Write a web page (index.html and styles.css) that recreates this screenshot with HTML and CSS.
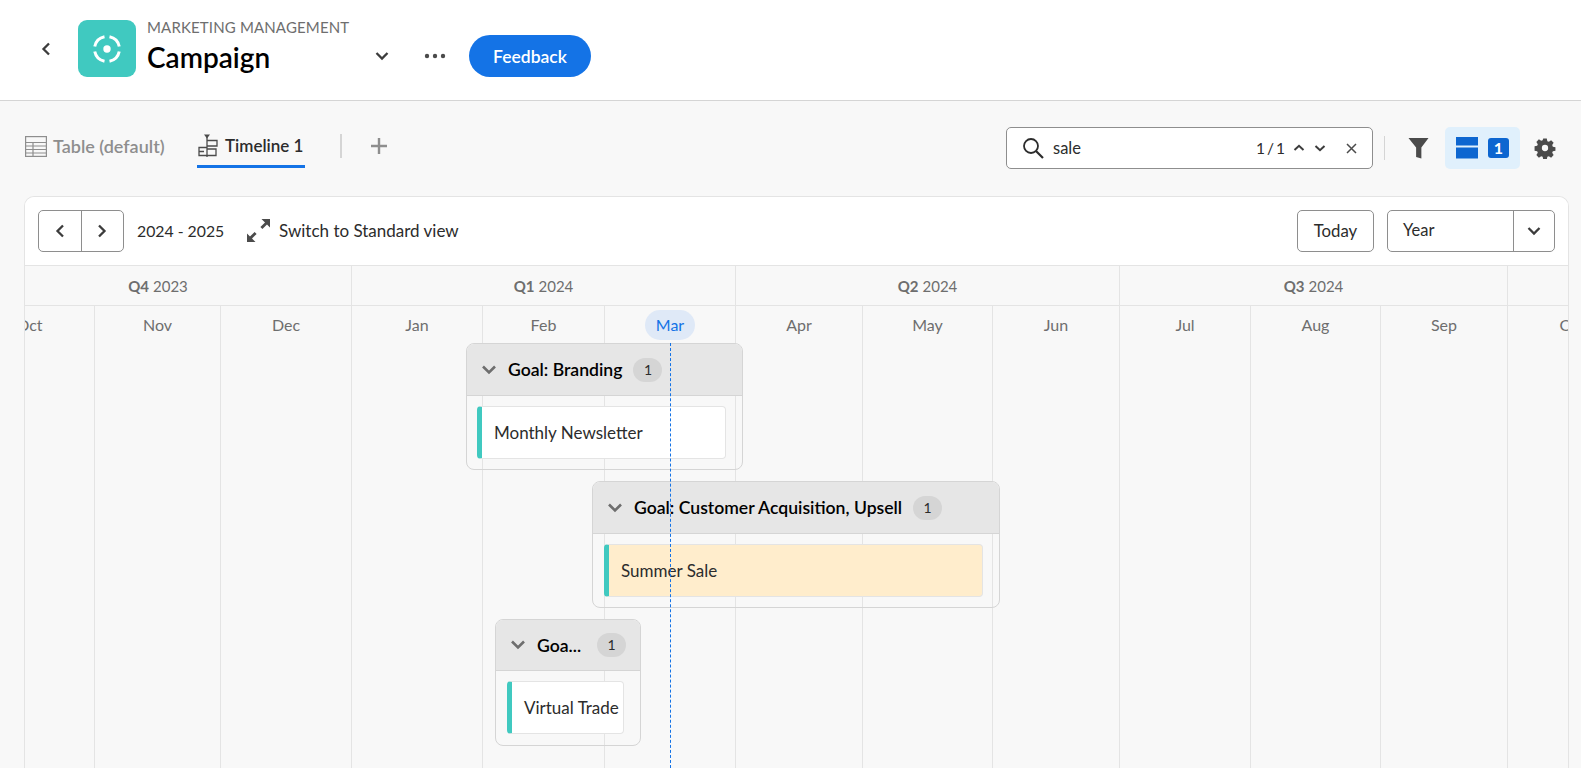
FILE: index.html
```html
<!DOCTYPE html>
<html lang="en">
<head>
  <meta charset="UTF-8">
  <meta name="viewport" content="width=device-width, initial-scale=1.0">
  <title>Campaign</title>
  <link rel="stylesheet" href="styles.css">
</head>
<body>
  <header class="app-header">
    <button class="icon-btn back-btn" aria-label="Back">
      <svg width="12" height="16" viewBox="0 0 12 16"><path d="M9 2.5 3.5 8 9 13.500" class="stroke-dark"/></svg>
    </button>
    <div class="logo">
      <svg width="30" height="30" viewBox="0 0 30 30">
        <circle cx="15" cy="15" r="3.700" fill="#fff"/>
        <path d="M2.750 12.500A12.500 12.500 0 0 1 12.500 2.750M17.500 2.750A12.500 12.500 0 0 1 27.250 12.500M27.250 17.500A12.500 12.500 0 0 1 17.500 27.250M12.500 27.250A12.500 12.500 0 0 1 2.750 17.500" fill="none" stroke="#fff" stroke-width="3"/>
      </svg>
    </div>
    <div class="title-block">
      <div class="eyebrow">MARKETING MANAGEMENT</div>
      <h1>Campaign</h1>
    </div>
    <button class="icon-btn title-chevron" aria-label="Switch">
      <svg width="16" height="12" viewBox="0 0 16 12"><path d="M2.500 3 8 8.500 13.500 3" class="stroke-dark"/></svg>
    </button>
    <button class="icon-btn more-btn" aria-label="More">
      <svg width="22" height="6" viewBox="0 0 22 6"><circle cx="3" cy="3" r="2.200"/><circle cx="11" cy="3" r="2.200"/><circle cx="19" cy="3" r="2.200"/></svg>
    </button>
    <button class="feedback-btn">Feedback</button>
  </header>

  <main class="page">
    <div class="view-bar">
      <div class="tab tab-muted">
        <svg width="22" height="22" viewBox="0 0 22 22" fill="none" stroke="#8e8e8e" stroke-width="1.200">
          <rect x="0.600" y="1.600" width="20.800" height="19.800"/>
          <path d="M1 7.500H21M1 11H21M1 14.500H21M1 18H21M8 7.500V21"/>
        </svg>
        <span>Table (default)</span>
      </div>
      <div class="tab tab-active">
        <svg width="22" height="24" viewBox="0 0 22 24" fill="none" stroke="#4b4b4b" stroke-width="1.300">
          <path d="M7 0.500h6l-3 4z" fill="#4b4b4b" stroke="none"/>
          <path d="M10 3v20"/>
          <path d="M10 6.500h10v5.500H10M10 15h9v6.500h-9M10 13.500H2v8h8M2 17.500h5"/>
        </svg>
        <span>Timeline 1</span>
      </div>
      <span class="bar-divider"></span>
      <button class="icon-btn plus-btn" aria-label="Add view">
        <svg width="16" height="16" viewBox="0 0 16 16"><path d="M8 0v16M0 8h16" stroke="#8e8e8e" stroke-width="2.400"/></svg>
      </button>

      <div class="search-box">
        <svg width="22" height="22" viewBox="0 0 22 22" fill="none" stroke="#2c2c2c" stroke-width="1.800"><circle cx="9" cy="9" r="7"/><path d="m14 14 7 7" stroke-width="2.200"/></svg>
        <span class="search-text">sale</span>
        <span class="search-count">1 / 1</span>
        <svg class="search-up" width="12" height="8" viewBox="0 0 12 8"><path d="M1.500 6 6 1.800 10.500 6" class="stroke-thin"/></svg>
        <svg class="search-down" width="12" height="8" viewBox="0 0 12 8"><path d="M1.500 2 6 6.200 10.500 2" class="stroke-thin"/></svg>
        <svg class="search-close" width="11" height="11" viewBox="0 0 11 11"><path d="m1 1 9 9M10 1l-9 9" stroke="#4b4b4b" stroke-width="1.500"/></svg>
      </div>
      <span class="bar-divider divider-right"></span>
      <svg class="filter-icon" width="21" height="23" viewBox="0 0 22 23"><path d="M0.500 0.500h21L14 10.500V22l-5.500-1.500V10.500z" fill="#4b4b4b"/></svg>
      <div class="layout-toggle">
        <svg width="22" height="22" viewBox="0 0 22 22" fill="#0d66d0"><rect y="0" width="22" height="8.500"/><rect y="10.500" width="22" height="11"/></svg>
        <span class="layout-badge">1</span>
      </div>
      <svg class="gear-icon" width="22" height="22" viewBox="0 0 22 22">
        <path fill="#4b4b4b" fill-rule="evenodd" d="M9 0.500h4l.6 2.900 1.700.7 2.500-1.600 2.800 2.800-1.600 2.500.7 1.700 2.900.6v4l-2.900.6-.7 1.700 1.600 2.500-2.800 2.800-2.500-1.600-1.700.7-.6 2.900H9l-.6-2.900-1.700-.7-2.500 1.600-2.800-2.800 1.600-2.500-.7-1.700-2.900-.6V9l2.900-.6.7-1.700-1.600-2.500 2.800-2.800 2.500 1.600 1.700-.7zM11 7.500a3.500 3.500 0 1 0 0 7 3.500 3.500 0 0 0 0-7z" transform="translate(1.100 1.100) scale(.9)"/>
      </svg>
    </div>

    <section class="timeline-card">
      <div class="timeline-toolbar">
        <div class="btn-group">
          <button class="group-btn" aria-label="Previous">
            <svg width="12" height="16" viewBox="0 0 12 16"><path d="M9 2.500 3.500 8 9 13.500" class="stroke-dark"/></svg>
          </button>
          <button class="group-btn" aria-label="Next">
            <svg width="12" height="16" viewBox="0 0 12 16"><path d="M3 2.500 8.500 8 3 13.500" class="stroke-dark"/></svg>
          </button>
        </div>
        <span class="range-label">2024 - 2025</span>
        <svg class="expand-icon" width="23" height="23" viewBox="0 0 23 23" fill="#4b4b4b">
          <path d="M23 0v8.500l-3-3-4.600 4.600-2-2L18 3.500 14.500 0z"/>
          <path d="M0 23v-8.500l3 3 4.600-4.600 2 2L5 19.500 8.500 23z"/>
        </svg>
        <span class="switch-label">Switch to Standard view</span>
        <button class="today-btn">Today</button>
        <div class="year-select">
          <span class="year-value">Year</span>
          <span class="year-arrow">
            <svg width="16" height="12" viewBox="0 0 16 12"><path d="M2.500 3 8 8.500 13.500 3" class="stroke-dark"/></svg>
          </span>
        </div>
      </div>

      <div class="track">
        <div class="quarters">
          <div class="quarter q4"><b>Q4</b> 2023</div>
          <div class="quarter q1"><b>Q1</b> 2024</div>
          <div class="quarter q2"><b>Q2</b> 2024</div>
          <div class="quarter q3"><b>Q3</b> 2024</div>
          <div class="quarter q4b"></div>
        </div>
        <div class="months">
          <div class="month w130"><span>Oct</span></div>
          <div class="month w126"><span>Nov</span></div>
          <div class="month w131"><span>Dec</span></div>
          <div class="month w131"><span>Jan</span></div>
          <div class="month w122"><span>Feb</span></div>
          <div class="month w131"><span class="current">Mar</span></div>
          <div class="month w127"><span>Apr</span></div>
          <div class="month w130"><span>May</span></div>
          <div class="month w127"><span>Jun</span></div>
          <div class="month w131"><span>Jul</span></div>
          <div class="month w130"><span>Aug</span></div>
          <div class="month w127"><span>Sep</span></div>
          <div class="month w130"><span>Oct</span></div>
        </div>

        <div class="goal goal-branding">
          <div class="goal-head">
            <svg width="16" height="12" viewBox="0 0 16 12"><path d="M2 2.500 8 8.500l6-6" class="stroke-grey"/></svg>
            <span class="goal-name">Goal: Branding</span>
            <span class="count">1</span>
          </div>
          <div class="goal-body"><div class="item">Monthly Newsletter</div></div>
        </div>

        <div class="goal goal-customer">
          <div class="goal-head">
            <svg width="16" height="12" viewBox="0 0 16 12"><path d="M2 2.500 8 8.500l6-6" class="stroke-grey"/></svg>
            <span class="goal-name">Goal: Customer Acquisition, Upsell</span>
            <span class="count">1</span>
          </div>
          <div class="goal-body"><div class="item item-match">Summer Sale</div></div>
        </div>

        <div class="goal goal-short">
          <div class="goal-head">
            <svg width="16" height="12" viewBox="0 0 16 12"><path d="M2 2.500 8 8.500l6-6" class="stroke-grey"/></svg>
            <span class="goal-name">Goa...</span>
            <span class="count">1</span>
          </div>
          <div class="goal-body"><div class="item">Virtual Trade</div></div>
        </div>

        <div class="today-line"></div>
      </div>
    </section>
  </main>
</body>
</html>
```

FILE: styles.css
```css
* { box-sizing: border-box; }

html, body {
  height: 100%;
}
body {
  margin: 0;
  display: flex;
  flex-direction: column;
  overflow: hidden;
  background: #f8f8f8;
  color: #2c2c2c;
  font-family: "Lato", "Noto Sans", sans-serif;
  font-size: 17px;
}
button {
  font: inherit;
  color: inherit;
  background: none;
  border: 0;
  padding: 0;
  cursor: pointer;
}
svg { display: block; flex: none; }
.stroke-dark { fill: none; stroke: #3c3c3c; stroke-width: 2.300; }
.stroke-thin { fill: none; stroke: #3c3c3c; stroke-width: 2; }
.stroke-grey { fill: none; stroke: #6e6e6e; stroke-width: 2.600; }

/* header */
.app-header {
  flex: none;
  height: 101px;
  display: flex;
  align-items: flex-start;
  background: #fff;
  border-bottom: 1px solid #d5d5d5;
}
.icon-btn { display: flex; align-items: center; justify-content: center; }
.back-btn { margin: 41px 0 0 40px; width: 12px; height: 16px; }
.logo {
  margin: 20px 0 0 26px;
  width: 58px;
  height: 57px;
  border-radius: 9px;
  background: #40c9c0;
  display: flex;
  align-items: center;
  justify-content: center;
}
.title-block { margin: 19px 0 0 11px; width: 219px; }
.eyebrow { font-size: 15px; line-height: 17px; color: #6e6e6e; letter-spacing: .15px; }
h1 {
  margin: 4px 0 0;
  font-size: 28px;
  line-height: 34px;
  font-weight: 600;
  color: #000;
}
.title-chevron { margin: 50px 0 0 8px; width: 16px; height: 12px; }
.more-btn { margin: 53px 0 0 34px; width: 22px; height: 6px; fill: #4b4b4b; }
.feedback-btn {
  margin: 35px 0 0 23px;
  width: 122px;
  height: 42px;
  border-radius: 21px;
  background: #1473e6;
  color: #fff;
  font-weight: 600;
  font-size: 17.500px;
}

/* view bar */
.page {
  flex: 1;
  min-height: 0;
  display: flex;
  flex-direction: column;
  padding: 0 12px 0 25px;
}
.view-bar {
  flex: none;
  height: 95px;
  padding-right: 13px;
  display: flex;
  align-items: flex-start;
}
.tab {
  display: flex;
  align-items: center;
  gap: 7px;
  height: 38px;
  margin-top: 28px;
  font-weight: 600;
  font-size: 17px;
}
.tab-muted { color: #8e8e8e; width: 172px; margin-top: 26px; gap: 6px; font-size: 18px; }
.tab-active {
  width: 108px;
  color: #2c2c2c;
  gap: 6px;
  border-bottom: 3px solid #1473e6;
  padding-bottom: 3px;
  height: 39px;
}
.bar-divider {
  flex: none;
  width: 2px;
  height: 24px;
  background: #d5d5d5;
  margin: 33px 0 0 35px;
}
.plus-btn { margin: 37px 0 0 29px; width: 16px; height: 16px; }

.search-box {
  margin: 26px 0 0 auto;
  width: 367px;
  height: 42px;
  flex: none;
  display: flex;
  align-items: center;
  background: #fff;
  border: 1px solid #8e8e8e;
  border-radius: 5px;
  padding-left: 15px;
}
.search-text { margin-left: 9px; font-size: 16.500px; flex: 1; }
.search-count { font-size: 15.500px; word-spacing: -2px; }
.search-up { margin-left: 8px; }
.search-down { margin-left: 9px; }
.search-close { margin: 0 15px 0 20px; }
.divider-right { width: 1px; height: 24px; margin: 35px 0 0 11px; }
.filter-icon { margin: 36px 0 0 23px; }
.layout-toggle {
  margin: 26px 0 0 16px;
  width: 75px;
  height: 42px;
  flex: none;
  display: flex;
  align-items: center;
  gap: 10px;
  padding-left: 11px;
  background: #e0f0fc;
  border-radius: 5px;
}
.layout-badge {
  width: 21px;
  height: 20px;
  border-radius: 3px;
  background: #0d66d0;
  color: #fff;
  font-weight: 700;
  font-size: 16px;
  text-align: center;
  line-height: 20px;
}
.gear-icon { margin: 36px 0 0 14px; }

/* timeline card */
.timeline-card {
  flex: 1;
  min-height: 0;
  margin-left: -1px;
  overflow: hidden;
  border: 1px solid #e4e4e4;
  border-bottom: 0;
  border-radius: 10px 10px 0 0;
  display: flex;
  flex-direction: column;
}
.timeline-toolbar {
  flex: none;
  height: 69px;
  display: flex;
  align-items: center;
  padding: 0 13px 1px 13px;
  background: #fff;
  border-bottom: 1px solid #e4e4e4;
}
.btn-group {
  display: flex;
  width: 86px;
  height: 42px;
  border: 1px solid #8e8e8e;
  border-radius: 5px;
}
.group-btn {
  flex: 1;
  display: flex;
  align-items: center;
  justify-content: center;
}
.group-btn + .group-btn { border-left: 1px solid #8e8e8e; }
.range-label { margin-left: 13px; width: 110px; font-size: 15.800px; }
.expand-icon { width: 23px; }
.switch-label { margin-left: 9px; font-size: 17px; }
.today-btn {
  margin-left: auto;
  width: 77px;
  height: 42px;
  background: #fff;
  border: 1px solid #8e8e8e;
  border-radius: 5px;
  font-size: 16.800px;
}
.year-select {
  margin-left: 13px;
  width: 168px;
  height: 42px;
  display: flex;
  align-items: center;
  border: 1px solid #8e8e8e;
  border-radius: 5px;
}
.year-value { flex: 1; padding: 0 0 2px 15px; font-size: 16.500px; }
.year-arrow {
  width: 41px;
  height: 100%;
  display: flex;
  align-items: center;
  justify-content: center;
  border-left: 1px solid #8e8e8e;
}

/* the track starts left of the card because October is cut off */
.track {
  position: relative;
  flex: 1;
  width: 1673px;
  margin-left: -60px;
  color: #6e6e6e;
  display: flex;
  flex-direction: column;
}
.quarters {
  flex: none;
  height: 40px;
  display: flex;
  border-bottom: 1px solid #e4e4e4;
}
.quarter {
  flex: none;
  display: flex;
  align-items: center;
  justify-content: center;
  gap: 4px;
  font-size: 15px;
  border-right: 1px solid #e4e4e4;
}
.quarter b { font-weight: 700; }
.q4 { width: 387px; }
.q1 { width: 384px; }
.q2 { width: 384px; }
.q3 { width: 388px; }
.q4b { width: 130px; }
.months { flex: 1; display: flex; }
.month {
  flex: none;
  height: 100%;
  padding-top: 4px;
  text-align: center;
  font-size: 16px;
  border-right: 1px solid #e4e4e4;
}
.month span {
  display: inline-block;
  height: 30px;
  line-height: 30px;
}
.month .current {
  width: 50px;
  border-radius: 15px;
  background: #dfe9f7;
  color: #1473e6;
}
.w122 { width: 122px; }
.w126 { width: 126px; }
.w127 { width: 127px; }
.w130 { width: 130px; }
.w131 { width: 131px; }

/* goals sit on the calendar, where each one falls in time */
.goal {
  position: absolute;
  height: 127px;
  border: 1px solid #d5d5d5;
  border-radius: 8px;
  overflow: hidden;
}
.goal-branding { left: 501px; top: 77px; width: 277px; }
.goal-customer { left: 627px; top: 215px; width: 408px; }
.goal-short { left: 530px; top: 353px; width: 146px; }
.goal-head {
  height: 52px;
  display: flex;
  align-items: center;
  padding: 0 14px 0 14px;
  background: #e6e6e6;
  border-bottom: 1px solid #d5d5d5;
  color: #000;
}
.goal-name {
  margin-left: 11px;
  font-size: 17.600px;
  font-weight: 600;
  white-space: nowrap;
}
.count {
  flex: none;
  margin-left: 11px;
  width: 29px;
  height: 24px;
  border-radius: 12px;
  background: #d5d5d5;
  text-align: center;
  font-size: 14px;
  line-height: 24px;
  color: #2c2c2c;
}
.goal-short .goal-head { height: 51px; }
.goal-short .count { margin-left: auto; }
.goal-body { padding: 10px 16px 11px 11px; }
.goal-branding .goal-body { padding-left: 10px; }
.item {
  height: 53px;
  line-height: 51px;
  padding-left: 12px;
  background: #fff;
  border: 1px solid #e4e4e4;
  border-left: 5px solid #40c9c0;
  border-radius: 4px;
  color: #2c2c2c;
  font-size: 17px;
  white-space: nowrap;
}
.item-match { background: #ffedcc; }
.today-line {
  position: absolute;
  left: 705px;
  top: 77px;
  bottom: 0;
  border-left: 1px dashed #1473e6;
}
```
